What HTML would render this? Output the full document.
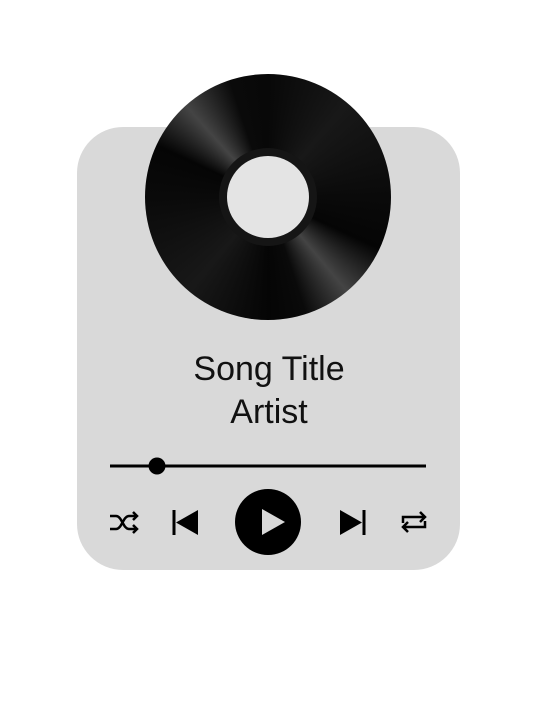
<!DOCTYPE html>
<html><head><style>
body{margin:0;width:550px;height:708px;background:#fff;position:relative;overflow:hidden;font-family:"Liberation Sans",sans-serif}
.card{position:absolute;left:77px;top:127px;width:383px;height:443px;background:#d9d9d9;border-radius:46px}
.disc{position:absolute;left:145px;top:74px;width:246px;height:246px;border-radius:50%;
background:conic-gradient(from 0deg,#080808 0deg,#181818 40deg,#0a0a0a 90deg,#050505 115deg,#444 140deg,#0a0a0a 162deg,#050505 180deg,#181818 220deg,#0a0a0a 270deg,#050505 295deg,#444 318deg,#0a0a0a 342deg,#080808 360deg)}
.ring{position:absolute;left:74px;top:74px;width:98px;height:98px;border-radius:50%;background:#151515}
.label{position:absolute;left:82px;top:82px;width:82px;height:82px;border-radius:50%;background:#e4e4e4}
.t{position:absolute;width:550px;text-align:center;color:#111;font-size:34px;left:-6px}
</style></head><body>
<div class="card"></div>
<div class="disc"><div class="ring"></div><div class="label"></div></div>
<div class="t" style="top:350px">Song Title</div>
<div class="t" style="top:393px">Artist</div>
<svg width="550" height="708" style="position:absolute;left:0;top:0">
<line x1="110" y1="466" x2="426" y2="466" stroke="#000" stroke-width="3"/>
<circle cx="157" cy="466" r="8.5" fill="#000"/>
<circle cx="268" cy="522" r="33" fill="#000"/>
<path d="M262 509 L262 535 L285 522 Z" fill="#d9d9d9"/>
<path d="M174 510 v25" stroke="#000" stroke-width="3"/>
<path d="M198 510 L176 522.5 L198 535 Z" fill="#000"/>
<path d="M364 510 v25" stroke="#000" stroke-width="3"/>
<path d="M340 510 L362 522.5 L340 535 Z" fill="#000"/>
<g stroke="#000" stroke-width="2.5" fill="none">
<path d="M110 516 h6 c6 0 7 13 13 13 h7"/>
<path d="M110 529 h6 c6 0 7 -13 13 -13 h7"/>
<path d="M133 512 l4 4 l-4 4 M133 525 l4 4 l-4 4"/>
<path d="M403 523 v-6 h22 M420 512 l5 5 l-5 5"/>
<path d="M425 521 v6 h-22 M408 522 l-5 5 l5 5"/>
</g>
</svg>
</body></html>
